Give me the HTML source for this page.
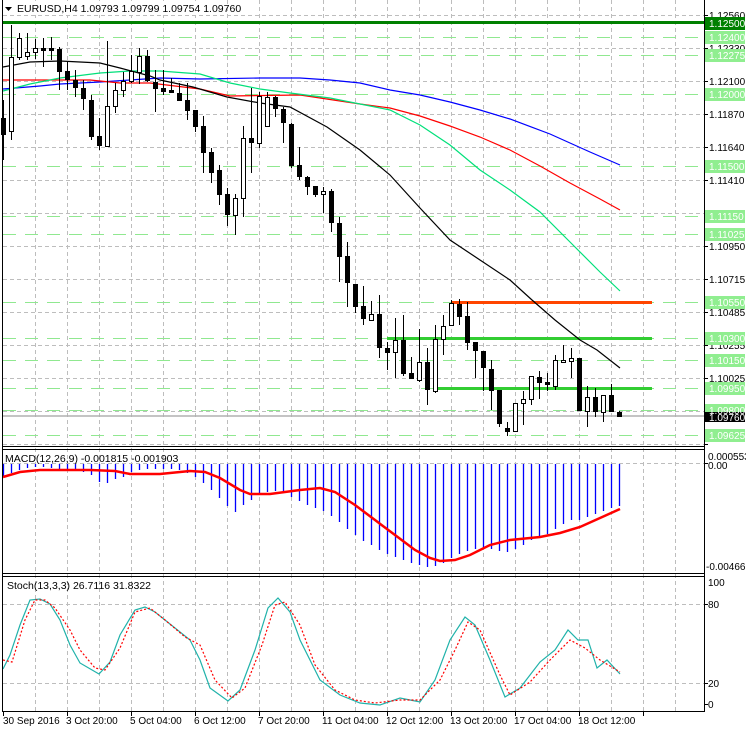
<!DOCTYPE html>
<html><head><meta charset="utf-8"><style>
html,body{margin:0;padding:0;background:#fff;}
svg{display:block;font-family:"Liberation Sans",sans-serif;font-size:10px;}
</style></head><body>
<svg width="746" height="731" viewBox="0 0 746 731" xmlns="http://www.w3.org/2000/svg">
<rect width="746" height="731" fill="#fff"/>
<g stroke="#bdbdbd" stroke-dasharray="4,3" stroke-width="1">
<path d="M35.5 0V711M67.5 0V711M99.5 0V711M131.5 0V711M163.5 0V711M195.5 0V711M227.5 0V711M259.5 0V711M291.5 0V711M323.5 0V711M355.5 0V711M387.5 0V711M419.5 0V711M451.5 0V711M483.5 0V711M515.5 0V711M547.5 0V711M579.5 0V711M611.5 0V711M643.5 0V711M675.5 0V711"/>
<path d="M3 15.5H704M3 48.5H704M3 81.5H704M3 114.5H704M3 147.5H704M3 180.5H704M3 213.5H704M3 246.5H704M3 279.5H704M3 312.5H704M3 345.5H704M3 378.5H704M3 411.5H704M3 444.5H704"/>
<path d="M3 463.5H704M3 604.5H704M3 683.5H704"/>
</g>
<g stroke="#90e890" stroke-dasharray="13,9" stroke-width="1">
<path d="M3 37.5H704M3 55.5H704M3 94.5H704M3 166.5H704M3 216.5H704M3 234.5H704M3 302.5H704M3 338.5H704M3 360.5H704M3 388.5H704M3 410.5H704M3 435.5H704"/>
</g>
<line x1="3" y1="416" x2="704" y2="416" stroke="#b0b0b0" stroke-width="1.5"/>
<rect x="3" y="21" width="701" height="3" fill="#008000"/>
<rect x="452" y="301" width="200" height="3" fill="#ff4500"/>
<rect x="387" y="337" width="265" height="3" fill="#32cd32"/>
<rect x="437" y="387" width="215" height="3" fill="#32cd32"/>
<g fill="none" stroke-width="1.2">
<polyline stroke="#0000ff" points="3,89 40,86 60,84 100,82 130,80 160,78 200,79 260,78 300,78 330,80 360,83 390,90 420,95 450,102 480,110 510,119 550,134 590,152 620,165"/>
<polyline stroke="#ff0000" points="3,80 50,80 90,80 120,83 150,83 200,89 230,96 300,95 360,104 390,108 420,116 450,126 480,137 510,150 540,166 570,183 600,199 620,210"/>
<polyline stroke="#00e07a" points="3,91 30,84 60,78 100,73 130,71 160,71 200,74 230,83 260,89 290,93 330,98 360,104 390,110 420,125 450,145 480,170 510,190 540,212 570,242 600,272 620,291"/>
<polyline stroke="#000" points="3,67 30,62 60,61 100,63 120,68 150,76 160,80 193,87 227,97 260,103 290,107 327,127 360,150 390,175 420,208 450,240 480,260 510,280 532,300 555,320 580,340 597,350 620,368"/>
</g>
<path stroke="#000" stroke-width="1" fill="none" d="M3.5 100V160M11.5 25V140M19.5 33V60M27.5 33V60M35.5 39V59M43.5 38V67M51.5 37V60M59.5 47V90M67.5 62V90M75.5 70V97M83.5 80V110M91.5 95V140M99.5 118V150M107.5 41V146M115.5 83V113M123.5 72V97M131.5 55V83M139.5 48V84M147.5 50V82M155.5 70V112M163.5 70V95M171.5 78V93M179.5 83V101M187.5 83V120M195.5 110V132M203.5 116V173M211.5 148V183M219.5 165V205M227.5 188V226M235.5 194V235M243.5 126V217M251.5 88V173M259.5 92V148M267.5 92V126M275.5 96V117M283.5 107V143M291.5 123V168M299.5 147V180M307.5 176V195M315.5 186V197M323.5 187V213M331.5 189V232M339.5 217V282M347.5 242V307M355.5 284V313M363.5 286V325M371.5 301V320M379.5 295V358M387.5 342V370M395.5 318V378M403.5 315V376M411.5 357V379M419.5 329V382M427.5 348V405M435.5 325V393M443.5 315V355M451.5 300V325M459.5 299V325M467.5 302V350M475.5 342V378M483.5 351V391M491.5 360V410M499.5 390V427M507.5 422V436M515.5 403V431M523.5 391V425M531.5 376V405M539.5 371V399M547.5 373V391M555.5 355V390M563.5 345V362M571.5 348V378M579.5 358V411M587.5 386V427M595.5 388V417M603.5 395V422M611.5 384V412M619.5 411V417"/>
<g fill="#000">
<rect x="1" y="118" width="5" height="17"/><rect x="41" y="48" width="5" height="3"/><rect x="49" y="48" width="5" height="3"/><rect x="57" y="49" width="5" height="23"/><rect x="65" y="71" width="5" height="9"/><rect x="73" y="80" width="5" height="8"/><rect x="81" y="88" width="5" height="11"/><rect x="89" y="100" width="5" height="37"/><rect x="97" y="136" width="5" height="10"/><rect x="145" y="56" width="5" height="25"/><rect x="153" y="82" width="5" height="7"/><rect x="161" y="88" width="5" height="4"/><rect x="169" y="90" width="5" height="3"/><rect x="177" y="93" width="5" height="8"/><rect x="185" y="100" width="5" height="11"/><rect x="193" y="110" width="5" height="17"/><rect x="201" y="126" width="5" height="27"/><rect x="209" y="152" width="5" height="21"/><rect x="217" y="170" width="5" height="25"/><rect x="225" y="194" width="5" height="21"/><rect x="249" y="138" width="5" height="5"/><rect x="273" y="97" width="5" height="12"/><rect x="281" y="109" width="5" height="14"/><rect x="289" y="124" width="5" height="42"/><rect x="297" y="165" width="5" height="12"/><rect x="305" y="177" width="5" height="10"/><rect x="313" y="186" width="5" height="9"/><rect x="329" y="191" width="5" height="32"/><rect x="337" y="223" width="5" height="34"/><rect x="345" y="256" width="5" height="27"/><rect x="353" y="284" width="5" height="23"/><rect x="361" y="306" width="5" height="13"/><rect x="377" y="314" width="5" height="34"/><rect x="385" y="348" width="5" height="5"/><rect x="401" y="340" width="5" height="34"/><rect x="409" y="373" width="5" height="6"/><rect x="425" y="362" width="5" height="28"/><rect x="457" y="304" width="5" height="13"/><rect x="465" y="316" width="5" height="27"/><rect x="473" y="342" width="5" height="9"/><rect x="481" y="351" width="5" height="17"/><rect x="489" y="369" width="5" height="22"/><rect x="497" y="390" width="5" height="34"/><rect x="505" y="428" width="5" height="4"/><rect x="537" y="377" width="5" height="6"/><rect x="545" y="382" width="5" height="3"/><rect x="577" y="358" width="5" height="53"/><rect x="593" y="397" width="5" height="15"/><rect x="609" y="395" width="5" height="17"/><rect x="617" y="412" width="5" height="5"/>
</g>
<g fill="#fff" stroke="#000" stroke-width="1">
<rect x="9.5" y="57.5" width="4" height="74"/><rect x="17.5" y="38.5" width="4" height="19"/><rect x="25.5" y="52.5" width="4" height="4"/><rect x="33.5" y="48.5" width="4" height="4"/><rect x="105.5" y="106.5" width="4" height="40"/><rect x="113.5" y="90.5" width="4" height="16"/><rect x="121.5" y="81.5" width="4" height="9"/><rect x="129.5" y="71.5" width="4" height="10"/><rect x="137.5" y="56.5" width="4" height="16"/><rect x="233.5" y="198.5" width="4" height="17"/><rect x="241.5" y="138.5" width="4" height="60"/><rect x="257.5" y="96.5" width="4" height="47"/><rect x="265.5" y="97.5" width="4" height="29"/><rect x="321.5" y="191.5" width="4" height="3"/><rect x="369.5" y="314.5" width="4" height="6"/><rect x="393.5" y="340.5" width="4" height="12"/><rect x="417.5" y="362.5" width="4" height="18"/><rect x="433.5" y="339.5" width="4" height="52"/><rect x="441.5" y="326.5" width="4" height="13"/><rect x="449.5" y="303.5" width="4" height="22"/><rect x="513.5" y="403.5" width="4" height="28"/><rect x="521.5" y="399.5" width="4" height="4"/><rect x="529.5" y="376.5" width="4" height="23"/><rect x="553.5" y="360.5" width="4" height="26"/><rect x="561.5" y="360.5" width="4" height="2"/><rect x="569.5" y="358.5" width="4" height="3"/><rect x="585.5" y="397.5" width="4" height="14"/><rect x="601.5" y="395.5" width="4" height="17"/>
</g>
<path stroke="#0000ff" stroke-width="1.3" fill="none" d="M3.5 464V477M11.5 464V473M19.5 464V470M27.5 464V468M35.5 464V467M43.5 464V467M51.5 464V468M59.5 464V469M67.5 464V470M75.5 464V471M83.5 464V472M91.5 464V475M99.5 464V482M107.5 464V483M115.5 464V479M123.5 464V477M131.5 464V472M139.5 464V470M147.5 464V469M155.5 464V469M163.5 464V469M171.5 464V469M179.5 464V470M187.5 464V473M195.5 464V477M203.5 464V483M211.5 464V490M219.5 464V498M227.5 464V506M235.5 464V512M243.5 464V505M251.5 464V500M259.5 464V495M267.5 464V492M275.5 464V491M283.5 464V493M291.5 464V497M299.5 464V501M307.5 464V505M315.5 464V508M323.5 464V511M331.5 464V516M339.5 464V522M347.5 464V529M355.5 464V535M363.5 464V541M371.5 464V545M379.5 464V550M387.5 464V554M395.5 464V557M403.5 464V560M411.5 464V563M419.5 464V565M427.5 464V567M435.5 464V566M443.5 464V563M451.5 464V558M459.5 464V554M467.5 464V551M475.5 464V549M483.5 464V548M491.5 464V549M499.5 464V551M507.5 464V552M515.5 464V549M523.5 464V545M531.5 464V540M539.5 464V537M547.5 464V534M555.5 464V529M563.5 464V524M571.5 464V520M579.5 464V520M587.5 464V517M595.5 464V514M603.5 464V511M611.5 464V508M619.5 464V506"/>
<polyline fill="none" stroke="#ff0000" stroke-width="2.5" points="3,477 20,472 40,470 60,470 90,470 115,471 130,474 160,474 190,471 205,472 220,478 240,490 250,494 270,494 300,490 320,488 335,492 355,505 375,520 395,535 415,550 430,558 440,561 455,560 470,555 490,545 510,540 540,537 560,533 580,527 600,518 620,509"/>
<polyline fill="none" stroke="#20b2aa" stroke-width="1.2" points="3,669 10,655 20,625 30,600 40,599 50,604 60,620 70,645 80,663 99,674 110,662 120,635 135,610 145,607 155,612 170,624 190,640 200,660 210,688 228,701 240,690 255,650 268,608 278,598 290,612 300,640 320,680 340,695 360,703 380,705 400,698 410,700 420,702 435,680 450,640 465,617 475,625 490,660 505,697 520,688 540,662 555,650 568,630 578,640 588,640 597,668 607,660 620,674"/>
<polyline fill="none" stroke="#ff0000" stroke-width="1.2" stroke-dasharray="2,2" points="3,660 12,662 25,620 35,600 45,600 55,608 70,630 80,650 95,668 105,670 120,648 135,612 150,608 165,620 185,637 200,645 215,680 232,698 245,688 262,645 275,605 285,602 300,625 315,665 335,690 355,700 375,703 400,700 420,700 440,680 455,650 468,622 480,630 500,675 510,695 530,682 550,660 570,640 585,648 600,660 620,672"/>
<g stroke="#000" stroke-width="1" fill="none">
<path d="M2.5 0V711.5M704.5 0V711.5M2 446.5H705M2 449.5H705M2 573.5H705M2 576.5H705M2 711.5H705"/>
<path d="M3.5 712V716M67.5 712V716M131.5 712V716M195.5 712V716M259.5 712V716M323.5 712V716M387.5 712V716M451.5 712V716M515.5 712V716M579.5 712V716M643.5 712V716"/>
<path d="M704 15.5H708M704 48.5H708M704 81.5H708M704 114.5H708M704 147.5H708M704 180.5H708M704 213.5H708M704 246.5H708M704 279.5H708M704 312.5H708M704 345.5H708M704 378.5H708M704 444.5H708M704 463.5H708M704 604.5H708M704 683.5H708M704 704.5H708"/>
</g>
<rect x="3" y="1" width="205" height="14" fill="#fff"/>
<path d="M5 7H12L8.5 11Z" fill="#000"/>
<text x="17" y="12" fill="#000" font-size="10.5">EURUSD,H4  1.09793 1.09799 1.09754 1.09760</text>
<text x="5" y="462" fill="#000" font-size="10.5">MACD(12,26,9) -0.001815 -0.001903</text>
<text x="7" y="589" fill="#000" font-size="10.5">Stoch(13,3,3) 26.7116 31.8322</text>
<g fill="#000">
<text x="709" y="19">1.12560</text><text x="709" y="52">1.12330</text><text x="709" y="85">1.12100</text><text x="709" y="118">1.11870</text><text x="709" y="151">1.11640</text><text x="709" y="184">1.11410</text><text x="709" y="217">1.11180</text><text x="709" y="250">1.10950</text><text x="709" y="283">1.10715</text><text x="709" y="316">1.10485</text><text x="709" y="349">1.10255</text><text x="709" y="382">1.10025</text><text x="709" y="438">1.09565</text>
<text x="708" y="460">0.000553</text><text x="708" y="469">0.00</text><text x="706" y="570">-0.004667</text>
<text x="708" y="586">100</text><text x="708" y="608">80</text><text x="708" y="687">20</text><text x="708" y="708">0</text>
</g>
<g fill="#90ee90">
<rect x="705" y="31" width="40" height="13"/><rect x="705" y="49" width="40" height="13"/><rect x="705" y="88" width="40" height="13"/><rect x="705" y="160" width="40" height="13"/><rect x="705" y="210" width="40" height="13"/><rect x="705" y="228" width="40" height="13"/><rect x="705" y="296" width="40" height="13"/><rect x="705" y="332" width="40" height="13"/><rect x="705" y="354" width="40" height="13"/><rect x="705" y="382" width="40" height="13"/><rect x="705" y="404" width="40" height="13"/><rect x="705" y="429" width="40" height="13"/>
</g>
<rect x="705" y="17" width="40" height="13" fill="#008000"/>
<rect x="705" y="412" width="40" height="10" fill="#000"/>
<g fill="#fff">
<text x="709" y="27">1.12500</text><text x="709" y="41">1.12400</text><text x="709" y="59">1.12275</text><text x="709" y="98">1.12000</text><text x="709" y="170">1.11500</text><text x="709" y="220">1.11150</text><text x="709" y="238">1.11025</text><text x="709" y="306">1.10550</text><text x="709" y="342">1.10300</text><text x="709" y="364">1.10150</text><text x="709" y="392">1.09950</text><text x="709" y="414">1.09800</text><text x="709" y="421">1.09760</text><text x="709" y="439">1.09625</text>
</g>
<g fill="#000">
<text x="3" y="724">30 Sep 2016</text><text x="66" y="724">3 Oct 20:00</text><text x="130" y="724">5 Oct 04:00</text><text x="194" y="724">6 Oct 12:00</text><text x="258" y="724">7 Oct 20:00</text><text x="322" y="724">11 Oct 04:00</text><text x="386" y="724">12 Oct 12:00</text><text x="450" y="724">13 Oct 20:00</text><text x="514" y="724">17 Oct 04:00</text><text x="578" y="724">18 Oct 12:00</text>
</g>
</svg>
</body></html>
